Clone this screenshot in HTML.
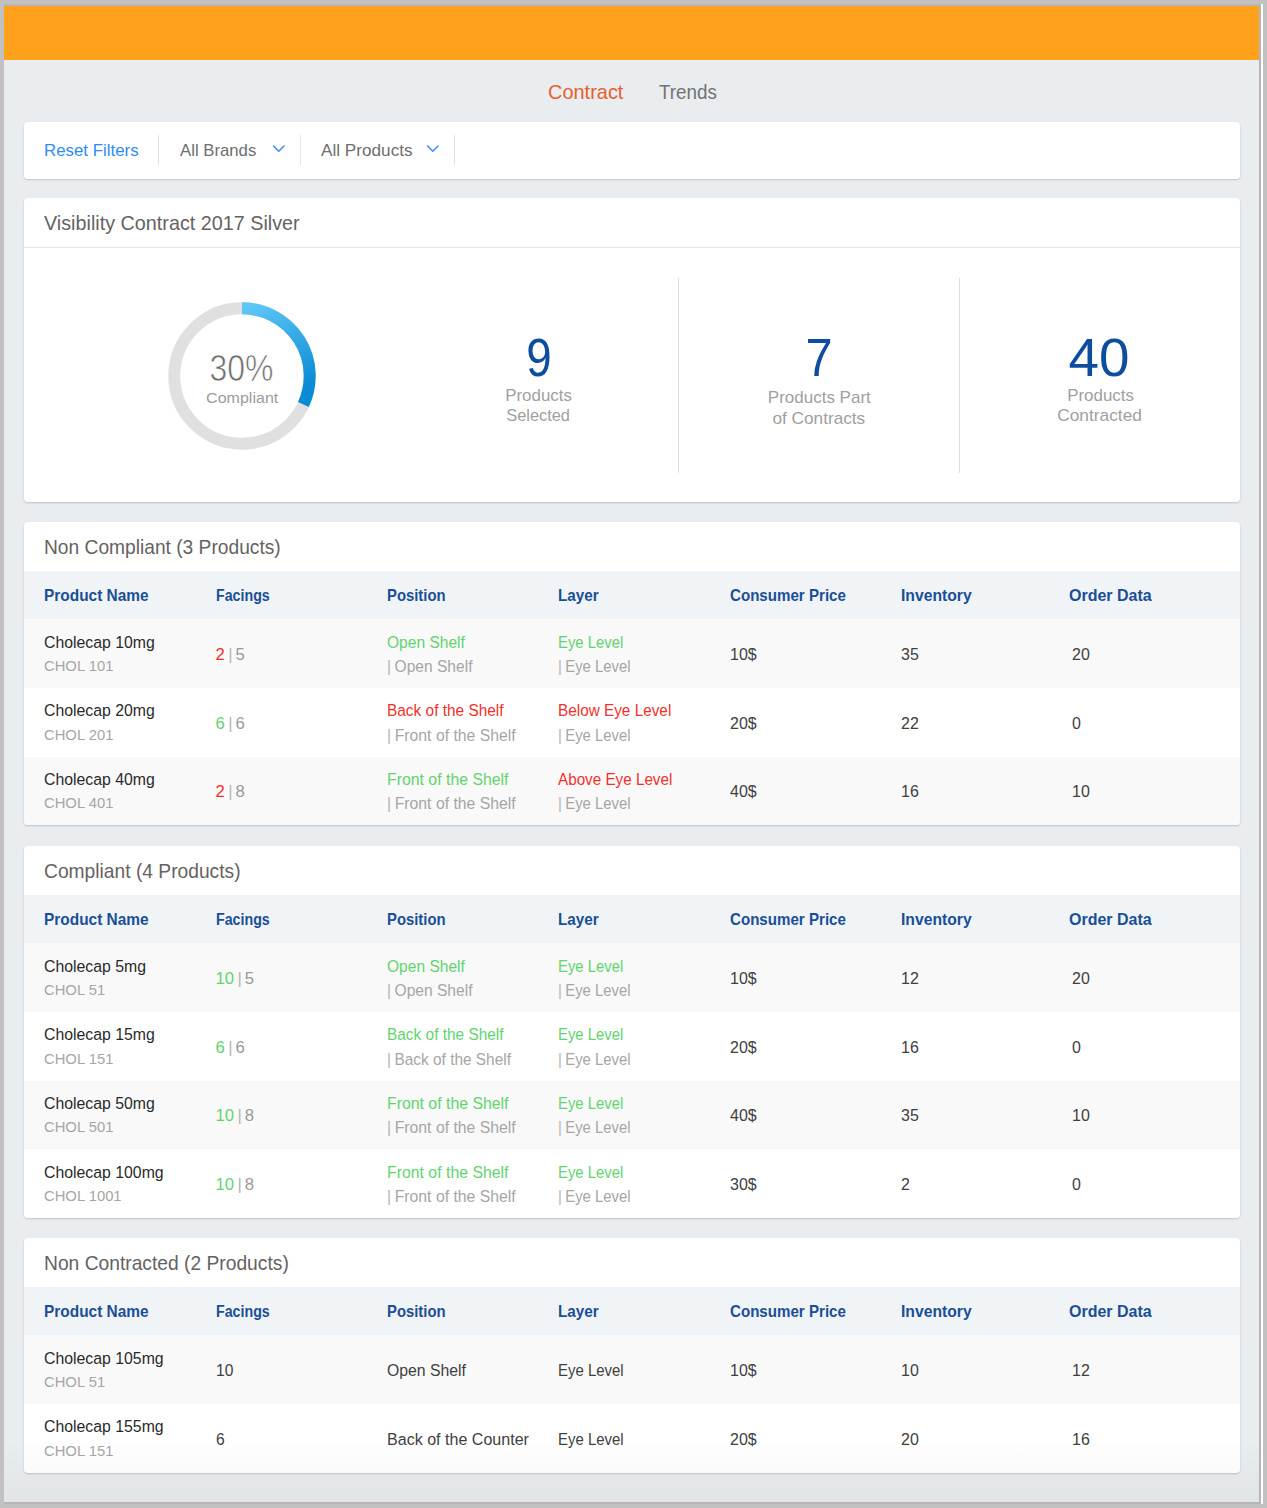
<!DOCTYPE html><html><head><meta charset="utf-8"><style>
*{margin:0;padding:0;box-sizing:border-box}
html,body{width:1267px;height:1508px;overflow:hidden}
body{background:#c1c1c1;position:relative;font-family:"Liberation Sans",sans-serif}
.a{position:absolute}
.t{position:absolute;white-space:nowrap;line-height:0;height:0}
.t span{display:inline-block;vertical-align:baseline;transform-origin:0 0}
.card{position:absolute;left:24px;width:1215.5px;background:#fff;border-radius:4px;box-shadow:0 1px 2px rgba(0,0,0,.18);overflow:hidden}
</style></head><body>
<div class="a" style="left:4px;top:4px;width:1257px;height:1500px;background:#b8b2b9"></div>
<div class="a" style="left:1261px;top:4px;width:2px;height:1500px;background:#ffffff"></div>
<div class="a" style="left:4px;top:6px;width:1255px;height:1496px;background:#e9edf0"></div>
<div class="a" style="left:4px;top:6px;width:1255px;height:54px;background:#ffa11a"></div>
<div class="t" style="left:547.5px;top:91.79px;font-size:20.8px;color:#e8602c;font-weight:normal;"><span style="transform:scaleX(0.9593);">Contract</span></div>
<div class="t" style="left:659px;top:91.79px;font-size:20.8px;color:#737373;font-weight:normal;"><span style="transform:scaleX(0.9062);">Trends</span></div>
<div class="card" style="top:122px;height:57px"></div>
<div class="t" style="left:44px;top:151.11px;font-size:17px;color:#2d8cf5;font-weight:normal;"><span style="transform:scaleX(0.9916);">Reset Filters</span></div>
<div class="a" style="left:158px;top:135px;width:1px;height:30px;background:#e3e3e3"></div>
<div class="a" style="left:300px;top:135px;width:1px;height:30px;background:#e3e3e3"></div>
<div class="a" style="left:454px;top:135px;width:1px;height:30px;background:#e3e3e3"></div>
<div class="t" style="left:180px;top:151.11px;font-size:17px;color:#6e6e6e;font-weight:normal;"><span style="transform:scaleX(0.9845);">All Brands</span></div>
<div class="t" style="left:320.5px;top:151.11px;font-size:17px;color:#6e6e6e;font-weight:normal;"><span style="transform:scaleX(1.0099);">All Products</span></div>
<svg class="a" style="left:271.5px;top:143px" width="14" height="12"><path d="M1.6 3 L6.8 8.2 L12 3" fill="none" stroke="#3d8ef7" stroke-width="1.6" stroke-linecap="round" stroke-linejoin="round"/></svg>
<svg class="a" style="left:426px;top:143px" width="14" height="12"><path d="M1.6 3 L6.8 8.2 L12 3" fill="none" stroke="#3d8ef7" stroke-width="1.6" stroke-linecap="round" stroke-linejoin="round"/></svg>
<div class="card" style="top:198px;height:304px"><div class="a" style="left:0;top:49px;width:100%;height:1px;background:#e6e6e6"></div></div>
<div class="t" style="left:43.6px;top:223.29px;font-size:20.8px;color:#666262;font-weight:normal;"><span style="transform:scaleX(0.9506);">Visibility Contract 2017 Silver</span></div>
<svg class="a" style="left:166px;top:300px" width="152" height="152" viewBox="0 0 152 152">
<defs><linearGradient id="g" x1="0" y1="0" x2="0.3" y2="1"><stop offset="0" stop-color="#5ec7f7"/><stop offset="1" stop-color="#0a8bd6"/></linearGradient></defs>
<circle cx="76" cy="76" r="67.7" fill="none" stroke="#e0e0e0" stroke-width="12"/>
<path d="M76 8.3 A67.7 67.7 0 0 1 137.4 104.5" fill="none" stroke="url(#g)" stroke-width="12"/>
</svg>
<div class="t" style="left:41.19999999999999px;width:400px;text-align:center;top:367.81px;font-size:37.5px;color:#6e6e6e;font-weight:normal;-webkit-text-stroke:0.7px #fff;"><span style="transform:scaleX(0.8522);transform-origin:50% 0">30%</span></div>
<div class="t" style="left:41.69999999999999px;width:400px;text-align:center;top:398.23px;font-size:15.2px;color:#9c9c9c;font-weight:normal;"><span style="transform:scaleX(1.0556);transform-origin:50% 0">Compliant</span></div>
<div class="a" style="left:678px;top:278px;width:1px;height:195px;background:#dedede"></div>
<div class="a" style="left:959px;top:278px;width:1px;height:195px;background:#dedede"></div>
<div class="t" style="left:339.29999999999995px;width:400px;text-align:center;top:356.99px;font-size:54px;color:#0d4c9f;font-weight:normal;"><span style="transform:scaleX(0.8467);transform-origin:50% 0">9</span></div>
<div class="t" style="left:338.5px;width:400px;text-align:center;top:395.61px;font-size:17px;color:#a0a0a0;font-weight:normal;"><span style="transform:scaleX(0.9955);transform-origin:50% 0">Products</span></div>
<div class="t" style="left:338.20000000000005px;width:400px;text-align:center;top:415.91px;font-size:17px;color:#a0a0a0;font-weight:normal;"><span style="transform:scaleX(0.9622);transform-origin:50% 0">Selected</span></div>
<div class="t" style="left:619.3px;width:400px;text-align:center;top:357.09px;font-size:54px;color:#0d4c9f;font-weight:normal;"><span style="transform:scaleX(0.9033);transform-origin:50% 0">7</span></div>
<div class="t" style="left:619.3px;width:400px;text-align:center;top:398.11px;font-size:17px;color:#a0a0a0;font-weight:normal;"><span style="transform-origin:50% 0">Products Part</span></div>
<div class="t" style="left:619.1px;width:400px;text-align:center;top:419.11px;font-size:17px;color:#a0a0a0;font-weight:normal;"><span style="transform:scaleX(1.0120);transform-origin:50% 0">of Contracts</span></div>
<div class="t" style="left:899.5px;width:400px;text-align:center;top:357.19px;font-size:54px;color:#0d4c9f;font-weight:normal;"><span style="transform:scaleX(1.0150);transform-origin:50% 0">40</span></div>
<div class="t" style="left:900.0999999999999px;width:400px;text-align:center;top:395.51px;font-size:17px;color:#a0a0a0;font-weight:normal;"><span style="transform:scaleX(0.9955);transform-origin:50% 0">Products</span></div>
<div class="t" style="left:899.9000000000001px;width:400px;text-align:center;top:416.41px;font-size:17px;color:#a0a0a0;font-weight:normal;"><span style="transform:scaleX(1.0192);transform-origin:50% 0">Contracted</span></div>
<div class="card" style="top:521.5px;height:303.59999999999997px">
<div class="a" style="left:0;top:49.5px;width:100%;height:48.3px;background:#f0f4f7"></div>
<div class="a" style="left:0;top:97.8px;width:100%;height:68.6px;background:#f9f9f9"></div>
<div class="a" style="left:0;top:166.39999999999998px;width:100%;height:68.6px;background:#ffffff"></div>
<div class="a" style="left:0;top:235.0px;width:100%;height:68.6px;background:#f9f9f9"></div>
</div>
<div class="t" style="left:43.7px;top:546.99px;font-size:20.8px;color:#666262;font-weight:normal;"><span style="transform:scaleX(0.9225);">Non Compliant (3 Products)</span></div>
<div class="t" style="left:44px;top:595.81px;font-size:16.7px;color:#1a4f96;font-weight:bold;"><span style="transform:scaleX(0.9249);">Product Name</span></div>
<div class="t" style="left:215.5px;top:595.81px;font-size:16.7px;color:#1a4f96;font-weight:bold;"><span style="transform:scaleX(0.8526);">Facings</span></div>
<div class="t" style="left:387px;top:595.81px;font-size:16.7px;color:#1a4f96;font-weight:bold;"><span style="transform:scaleX(0.8892);">Position</span></div>
<div class="t" style="left:558px;top:595.81px;font-size:16.7px;color:#1a4f96;font-weight:bold;"><span style="transform:scaleX(0.9126);">Layer</span></div>
<div class="t" style="left:730px;top:595.81px;font-size:16.7px;color:#1a4f96;font-weight:bold;"><span style="transform:scaleX(0.9055);">Consumer Price</span></div>
<div class="t" style="left:900.5px;top:595.81px;font-size:16.7px;color:#1a4f96;font-weight:bold;"><span style="transform:scaleX(0.9402);">Inventory</span></div>
<div class="t" style="left:1069px;top:595.81px;font-size:16.7px;color:#1a4f96;font-weight:bold;"><span style="transform:scaleX(0.9583);">Order Data</span></div>
<div class="t" style="left:44px;top:642.71px;font-size:16.7px;color:#2a2a2a;font-weight:normal;"><span style="transform:scaleX(0.9480);">Cholecap 10mg</span></div>
<div class="t" style="left:44px;top:665.97px;font-size:14.8px;color:#a6a6a6;font-weight:normal;"><span style="">CHOL 101</span></div>
<div class="t" style="left:215.5px;top:654.91px;font-size:16.7px;color:#9a9a9a;font-weight:normal;"><span style=""><span style="color:#f2302b">2</span><span style="color:#b4b4b4;margin:0 2.8px 0 3.5px">|</span>5</span></div>
<div class="t" style="left:387px;top:642.71px;font-size:16.7px;color:#62d46e;font-weight:normal;"><span style="transform:scaleX(0.9330);">Open Shelf</span></div>
<div class="t" style="left:387px;top:667.11px;font-size:16.7px;color:#a6a6a6;font-weight:normal;"><span style="transform:scaleX(0.9325);"><span style="margin-right:3.8px;color:#b4b4b4">|</span>Open Shelf</span></div>
<div class="t" style="left:558px;top:642.71px;font-size:16.7px;color:#62d46e;font-weight:normal;"><span style="transform:scaleX(0.8909);">Eye Level</span></div>
<div class="t" style="left:558px;top:667.11px;font-size:16.7px;color:#a6a6a6;font-weight:normal;"><span style="transform:scaleX(0.8896);"><span style="margin-right:3.8px;color:#b4b4b4">|</span>Eye Level</span></div>
<div class="t" style="left:730px;top:654.91px;font-size:16.7px;color:#404040;font-weight:normal;"><span style="transform:scaleX(0.9570);">10$</span></div>
<div class="t" style="left:900.5px;top:654.91px;font-size:16.7px;color:#404040;font-weight:normal;"><span style="transform:scaleX(0.9570);">35</span></div>
<div class="t" style="left:1072px;top:654.91px;font-size:16.7px;color:#404040;font-weight:normal;"><span style="transform:scaleX(0.9570);">20</span></div>
<div class="t" style="left:44px;top:711.31px;font-size:16.7px;color:#2a2a2a;font-weight:normal;"><span style="transform:scaleX(0.9480);">Cholecap 20mg</span></div>
<div class="t" style="left:44px;top:734.57px;font-size:14.8px;color:#a6a6a6;font-weight:normal;"><span style="">CHOL 201</span></div>
<div class="t" style="left:215.5px;top:723.51px;font-size:16.7px;color:#9a9a9a;font-weight:normal;"><span style=""><span style="color:#62d46e">6</span><span style="color:#b4b4b4;margin:0 2.8px 0 3.5px">|</span>6</span></div>
<div class="t" style="left:387px;top:711.31px;font-size:16.7px;color:#f2302b;font-weight:normal;"><span style="transform:scaleX(0.9240);">Back of the Shelf</span></div>
<div class="t" style="left:387px;top:735.71px;font-size:16.7px;color:#a6a6a6;font-weight:normal;"><span style="transform:scaleX(0.9450);"><span style="margin-right:3.8px;color:#b4b4b4">|</span>Front of the Shelf</span></div>
<div class="t" style="left:558px;top:711.31px;font-size:16.7px;color:#f2302b;font-weight:normal;"><span style="transform:scaleX(0.9182);">Below Eye Level</span></div>
<div class="t" style="left:558px;top:735.71px;font-size:16.7px;color:#a6a6a6;font-weight:normal;"><span style="transform:scaleX(0.8896);"><span style="margin-right:3.8px;color:#b4b4b4">|</span>Eye Level</span></div>
<div class="t" style="left:730px;top:723.51px;font-size:16.7px;color:#404040;font-weight:normal;"><span style="transform:scaleX(0.9570);">20$</span></div>
<div class="t" style="left:900.5px;top:723.51px;font-size:16.7px;color:#404040;font-weight:normal;"><span style="transform:scaleX(0.9570);">22</span></div>
<div class="t" style="left:1072px;top:723.51px;font-size:16.7px;color:#404040;font-weight:normal;"><span style="transform:scaleX(0.9570);">0</span></div>
<div class="t" style="left:44px;top:779.91px;font-size:16.7px;color:#2a2a2a;font-weight:normal;"><span style="transform:scaleX(0.9480);">Cholecap 40mg</span></div>
<div class="t" style="left:44px;top:803.17px;font-size:14.8px;color:#a6a6a6;font-weight:normal;"><span style="">CHOL 401</span></div>
<div class="t" style="left:215.5px;top:792.11px;font-size:16.7px;color:#9a9a9a;font-weight:normal;"><span style=""><span style="color:#f2302b">2</span><span style="color:#b4b4b4;margin:0 2.8px 0 3.5px">|</span>8</span></div>
<div class="t" style="left:387px;top:779.91px;font-size:16.7px;color:#62d46e;font-weight:normal;"><span style="transform:scaleX(0.9493);">Front of the Shelf</span></div>
<div class="t" style="left:387px;top:804.31px;font-size:16.7px;color:#a6a6a6;font-weight:normal;"><span style="transform:scaleX(0.9450);"><span style="margin-right:3.8px;color:#b4b4b4">|</span>Front of the Shelf</span></div>
<div class="t" style="left:558px;top:779.91px;font-size:16.7px;color:#f2302b;font-weight:normal;"><span style="transform:scaleX(0.9130);">Above Eye Level</span></div>
<div class="t" style="left:558px;top:804.31px;font-size:16.7px;color:#a6a6a6;font-weight:normal;"><span style="transform:scaleX(0.8896);"><span style="margin-right:3.8px;color:#b4b4b4">|</span>Eye Level</span></div>
<div class="t" style="left:730px;top:792.11px;font-size:16.7px;color:#404040;font-weight:normal;"><span style="transform:scaleX(0.9570);">40$</span></div>
<div class="t" style="left:900.5px;top:792.11px;font-size:16.7px;color:#404040;font-weight:normal;"><span style="transform:scaleX(0.9570);">16</span></div>
<div class="t" style="left:1072px;top:792.11px;font-size:16.7px;color:#404040;font-weight:normal;"><span style="transform:scaleX(0.9570);">10</span></div>
<div class="card" style="top:845.5px;height:372.2px">
<div class="a" style="left:0;top:49.5px;width:100%;height:48.3px;background:#f0f4f7"></div>
<div class="a" style="left:0;top:97.8px;width:100%;height:68.6px;background:#f9f9f9"></div>
<div class="a" style="left:0;top:166.39999999999998px;width:100%;height:68.6px;background:#ffffff"></div>
<div class="a" style="left:0;top:235.0px;width:100%;height:68.6px;background:#f9f9f9"></div>
<div class="a" style="left:0;top:303.59999999999997px;width:100%;height:68.6px;background:#ffffff"></div>
</div>
<div class="t" style="left:43.7px;top:870.99px;font-size:20.8px;color:#666262;font-weight:normal;"><span style="transform:scaleX(0.9243);">Compliant (4 Products)</span></div>
<div class="t" style="left:44px;top:919.81px;font-size:16.7px;color:#1a4f96;font-weight:bold;"><span style="transform:scaleX(0.9249);">Product Name</span></div>
<div class="t" style="left:215.5px;top:919.81px;font-size:16.7px;color:#1a4f96;font-weight:bold;"><span style="transform:scaleX(0.8526);">Facings</span></div>
<div class="t" style="left:387px;top:919.81px;font-size:16.7px;color:#1a4f96;font-weight:bold;"><span style="transform:scaleX(0.8892);">Position</span></div>
<div class="t" style="left:558px;top:919.81px;font-size:16.7px;color:#1a4f96;font-weight:bold;"><span style="transform:scaleX(0.9126);">Layer</span></div>
<div class="t" style="left:730px;top:919.81px;font-size:16.7px;color:#1a4f96;font-weight:bold;"><span style="transform:scaleX(0.9055);">Consumer Price</span></div>
<div class="t" style="left:900.5px;top:919.81px;font-size:16.7px;color:#1a4f96;font-weight:bold;"><span style="transform:scaleX(0.9402);">Inventory</span></div>
<div class="t" style="left:1069px;top:919.81px;font-size:16.7px;color:#1a4f96;font-weight:bold;"><span style="transform:scaleX(0.9583);">Order Data</span></div>
<div class="t" style="left:44px;top:966.71px;font-size:16.7px;color:#2a2a2a;font-weight:normal;"><span style="transform:scaleX(0.9480);">Cholecap 5mg</span></div>
<div class="t" style="left:44px;top:989.97px;font-size:14.8px;color:#a6a6a6;font-weight:normal;"><span style="">CHOL 51</span></div>
<div class="t" style="left:215.5px;top:978.91px;font-size:16.7px;color:#9a9a9a;font-weight:normal;"><span style=""><span style="color:#62d46e">10</span><span style="color:#b4b4b4;margin:0 2.8px 0 3.5px">|</span>5</span></div>
<div class="t" style="left:387px;top:966.71px;font-size:16.7px;color:#62d46e;font-weight:normal;"><span style="transform:scaleX(0.9330);">Open Shelf</span></div>
<div class="t" style="left:387px;top:991.11px;font-size:16.7px;color:#a6a6a6;font-weight:normal;"><span style="transform:scaleX(0.9325);"><span style="margin-right:3.8px;color:#b4b4b4">|</span>Open Shelf</span></div>
<div class="t" style="left:558px;top:966.71px;font-size:16.7px;color:#62d46e;font-weight:normal;"><span style="transform:scaleX(0.8909);">Eye Level</span></div>
<div class="t" style="left:558px;top:991.11px;font-size:16.7px;color:#a6a6a6;font-weight:normal;"><span style="transform:scaleX(0.8896);"><span style="margin-right:3.8px;color:#b4b4b4">|</span>Eye Level</span></div>
<div class="t" style="left:730px;top:978.91px;font-size:16.7px;color:#404040;font-weight:normal;"><span style="transform:scaleX(0.9570);">10$</span></div>
<div class="t" style="left:900.5px;top:978.91px;font-size:16.7px;color:#404040;font-weight:normal;"><span style="transform:scaleX(0.9570);">12</span></div>
<div class="t" style="left:1072px;top:978.91px;font-size:16.7px;color:#404040;font-weight:normal;"><span style="transform:scaleX(0.9570);">20</span></div>
<div class="t" style="left:44px;top:1035.31px;font-size:16.7px;color:#2a2a2a;font-weight:normal;"><span style="transform:scaleX(0.9480);">Cholecap 15mg</span></div>
<div class="t" style="left:44px;top:1058.57px;font-size:14.8px;color:#a6a6a6;font-weight:normal;"><span style="">CHOL 151</span></div>
<div class="t" style="left:215.5px;top:1047.51px;font-size:16.7px;color:#9a9a9a;font-weight:normal;"><span style=""><span style="color:#62d46e">6</span><span style="color:#b4b4b4;margin:0 2.8px 0 3.5px">|</span>6</span></div>
<div class="t" style="left:387px;top:1035.31px;font-size:16.7px;color:#62d46e;font-weight:normal;"><span style="transform:scaleX(0.9240);">Back of the Shelf</span></div>
<div class="t" style="left:387px;top:1059.71px;font-size:16.7px;color:#a6a6a6;font-weight:normal;"><span style="transform:scaleX(0.9226);"><span style="margin-right:3.8px;color:#b4b4b4">|</span>Back of the Shelf</span></div>
<div class="t" style="left:558px;top:1035.31px;font-size:16.7px;color:#62d46e;font-weight:normal;"><span style="transform:scaleX(0.8909);">Eye Level</span></div>
<div class="t" style="left:558px;top:1059.71px;font-size:16.7px;color:#a6a6a6;font-weight:normal;"><span style="transform:scaleX(0.8896);"><span style="margin-right:3.8px;color:#b4b4b4">|</span>Eye Level</span></div>
<div class="t" style="left:730px;top:1047.51px;font-size:16.7px;color:#404040;font-weight:normal;"><span style="transform:scaleX(0.9570);">20$</span></div>
<div class="t" style="left:900.5px;top:1047.51px;font-size:16.7px;color:#404040;font-weight:normal;"><span style="transform:scaleX(0.9570);">16</span></div>
<div class="t" style="left:1072px;top:1047.51px;font-size:16.7px;color:#404040;font-weight:normal;"><span style="transform:scaleX(0.9570);">0</span></div>
<div class="t" style="left:44px;top:1103.91px;font-size:16.7px;color:#2a2a2a;font-weight:normal;"><span style="transform:scaleX(0.9480);">Cholecap 50mg</span></div>
<div class="t" style="left:44px;top:1127.17px;font-size:14.8px;color:#a6a6a6;font-weight:normal;"><span style="">CHOL 501</span></div>
<div class="t" style="left:215.5px;top:1116.11px;font-size:16.7px;color:#9a9a9a;font-weight:normal;"><span style=""><span style="color:#62d46e">10</span><span style="color:#b4b4b4;margin:0 2.8px 0 3.5px">|</span>8</span></div>
<div class="t" style="left:387px;top:1103.91px;font-size:16.7px;color:#62d46e;font-weight:normal;"><span style="transform:scaleX(0.9493);">Front of the Shelf</span></div>
<div class="t" style="left:387px;top:1128.31px;font-size:16.7px;color:#a6a6a6;font-weight:normal;"><span style="transform:scaleX(0.9450);"><span style="margin-right:3.8px;color:#b4b4b4">|</span>Front of the Shelf</span></div>
<div class="t" style="left:558px;top:1103.91px;font-size:16.7px;color:#62d46e;font-weight:normal;"><span style="transform:scaleX(0.8909);">Eye Level</span></div>
<div class="t" style="left:558px;top:1128.31px;font-size:16.7px;color:#a6a6a6;font-weight:normal;"><span style="transform:scaleX(0.8896);"><span style="margin-right:3.8px;color:#b4b4b4">|</span>Eye Level</span></div>
<div class="t" style="left:730px;top:1116.11px;font-size:16.7px;color:#404040;font-weight:normal;"><span style="transform:scaleX(0.9570);">40$</span></div>
<div class="t" style="left:900.5px;top:1116.11px;font-size:16.7px;color:#404040;font-weight:normal;"><span style="transform:scaleX(0.9570);">35</span></div>
<div class="t" style="left:1072px;top:1116.11px;font-size:16.7px;color:#404040;font-weight:normal;"><span style="transform:scaleX(0.9570);">10</span></div>
<div class="t" style="left:44px;top:1172.51px;font-size:16.7px;color:#2a2a2a;font-weight:normal;"><span style="transform:scaleX(0.9480);">Cholecap 100mg</span></div>
<div class="t" style="left:44px;top:1195.77px;font-size:14.8px;color:#a6a6a6;font-weight:normal;"><span style="">CHOL 1001</span></div>
<div class="t" style="left:215.5px;top:1184.71px;font-size:16.7px;color:#9a9a9a;font-weight:normal;"><span style=""><span style="color:#62d46e">10</span><span style="color:#b4b4b4;margin:0 2.8px 0 3.5px">|</span>8</span></div>
<div class="t" style="left:387px;top:1172.51px;font-size:16.7px;color:#62d46e;font-weight:normal;"><span style="transform:scaleX(0.9493);">Front of the Shelf</span></div>
<div class="t" style="left:387px;top:1196.91px;font-size:16.7px;color:#a6a6a6;font-weight:normal;"><span style="transform:scaleX(0.9450);"><span style="margin-right:3.8px;color:#b4b4b4">|</span>Front of the Shelf</span></div>
<div class="t" style="left:558px;top:1172.51px;font-size:16.7px;color:#62d46e;font-weight:normal;"><span style="transform:scaleX(0.8909);">Eye Level</span></div>
<div class="t" style="left:558px;top:1196.91px;font-size:16.7px;color:#a6a6a6;font-weight:normal;"><span style="transform:scaleX(0.8896);"><span style="margin-right:3.8px;color:#b4b4b4">|</span>Eye Level</span></div>
<div class="t" style="left:730px;top:1184.71px;font-size:16.7px;color:#404040;font-weight:normal;"><span style="transform:scaleX(0.9570);">30$</span></div>
<div class="t" style="left:900.5px;top:1184.71px;font-size:16.7px;color:#404040;font-weight:normal;"><span style="transform:scaleX(0.9570);">2</span></div>
<div class="t" style="left:1072px;top:1184.71px;font-size:16.7px;color:#404040;font-weight:normal;"><span style="transform:scaleX(0.9570);">0</span></div>
<div class="card" style="top:1237.5px;height:235.0px">
<div class="a" style="left:0;top:49.5px;width:100%;height:48.3px;background:#f0f4f7"></div>
<div class="a" style="left:0;top:97.8px;width:100%;height:68.6px;background:#f9f9f9"></div>
<div class="a" style="left:0;top:166.39999999999998px;width:100%;height:68.6px;background:#ffffff"></div>
</div>
<div class="t" style="left:43.7px;top:1262.99px;font-size:20.8px;color:#666262;font-weight:normal;"><span style="transform:scaleX(0.9248);">Non Contracted (2 Products)</span></div>
<div class="t" style="left:44px;top:1311.81px;font-size:16.7px;color:#1a4f96;font-weight:bold;"><span style="transform:scaleX(0.9249);">Product Name</span></div>
<div class="t" style="left:215.5px;top:1311.81px;font-size:16.7px;color:#1a4f96;font-weight:bold;"><span style="transform:scaleX(0.8526);">Facings</span></div>
<div class="t" style="left:387px;top:1311.81px;font-size:16.7px;color:#1a4f96;font-weight:bold;"><span style="transform:scaleX(0.8892);">Position</span></div>
<div class="t" style="left:558px;top:1311.81px;font-size:16.7px;color:#1a4f96;font-weight:bold;"><span style="transform:scaleX(0.9126);">Layer</span></div>
<div class="t" style="left:730px;top:1311.81px;font-size:16.7px;color:#1a4f96;font-weight:bold;"><span style="transform:scaleX(0.9055);">Consumer Price</span></div>
<div class="t" style="left:900.5px;top:1311.81px;font-size:16.7px;color:#1a4f96;font-weight:bold;"><span style="transform:scaleX(0.9402);">Inventory</span></div>
<div class="t" style="left:1069px;top:1311.81px;font-size:16.7px;color:#1a4f96;font-weight:bold;"><span style="transform:scaleX(0.9583);">Order Data</span></div>
<div class="t" style="left:44px;top:1358.71px;font-size:16.7px;color:#2a2a2a;font-weight:normal;"><span style="transform:scaleX(0.9480);">Cholecap 105mg</span></div>
<div class="t" style="left:44px;top:1381.97px;font-size:14.8px;color:#a6a6a6;font-weight:normal;"><span style="">CHOL 51</span></div>
<div class="t" style="left:215.5px;top:1370.91px;font-size:16.7px;color:#404040;font-weight:normal;"><span style="transform:scaleX(0.9350);">10</span></div>
<div class="t" style="left:387px;top:1370.91px;font-size:16.7px;color:#404040;font-weight:normal;"><span style="transform:scaleX(0.9450);">Open Shelf</span></div>
<div class="t" style="left:558px;top:1370.91px;font-size:16.7px;color:#404040;font-weight:normal;"><span style="transform:scaleX(0.8950);">Eye Level</span></div>
<div class="t" style="left:730px;top:1370.91px;font-size:16.7px;color:#404040;font-weight:normal;"><span style="transform:scaleX(0.9570);">10$</span></div>
<div class="t" style="left:900.5px;top:1370.91px;font-size:16.7px;color:#404040;font-weight:normal;"><span style="transform:scaleX(0.9570);">10</span></div>
<div class="t" style="left:1072px;top:1370.91px;font-size:16.7px;color:#404040;font-weight:normal;"><span style="transform:scaleX(0.9570);">12</span></div>
<div class="t" style="left:44px;top:1427.31px;font-size:16.7px;color:#2a2a2a;font-weight:normal;"><span style="transform:scaleX(0.9480);">Cholecap 155mg</span></div>
<div class="t" style="left:44px;top:1450.57px;font-size:14.8px;color:#a6a6a6;font-weight:normal;"><span style="">CHOL 151</span></div>
<div class="t" style="left:215.5px;top:1439.51px;font-size:16.7px;color:#404040;font-weight:normal;"><span style="transform:scaleX(0.9350);">6</span></div>
<div class="t" style="left:387px;top:1439.51px;font-size:16.7px;color:#404040;font-weight:normal;"><span style="transform:scaleX(0.9621);">Back of the Counter</span></div>
<div class="t" style="left:558px;top:1439.51px;font-size:16.7px;color:#404040;font-weight:normal;"><span style="transform:scaleX(0.8950);">Eye Level</span></div>
<div class="t" style="left:730px;top:1439.51px;font-size:16.7px;color:#404040;font-weight:normal;"><span style="transform:scaleX(0.9570);">20$</span></div>
<div class="t" style="left:900.5px;top:1439.51px;font-size:16.7px;color:#404040;font-weight:normal;"><span style="transform:scaleX(0.9570);">20</span></div>
<div class="t" style="left:1072px;top:1439.51px;font-size:16.7px;color:#404040;font-weight:normal;"><span style="transform:scaleX(0.9570);">16</span></div>
<div class="a" style="left:4px;top:1440px;width:1255px;height:62px;background:linear-gradient(rgba(0,0,0,0),rgba(0,0,0,.035))"></div>
</body></html>
